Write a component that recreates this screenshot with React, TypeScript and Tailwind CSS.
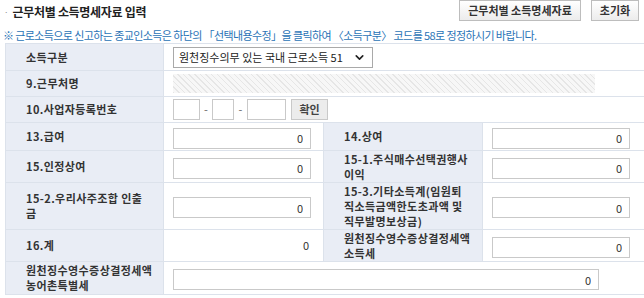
import { ChevronDown } from "lucide-react";

const font = { fontFamily: '"Noto Sans CJK KR", "Noto Sans", sans-serif' };

function Label({ children, className = "" }: { children: React.ReactNode; className?: string }) {
  return (
    <td className={`bg-[#e9edf5] border border-[#dce2eb] pl-[20px] text-[11px] font-bold leading-[15px] tracking-[0.4px] text-[#333] align-middle ${className}`}>
      {children}
    </td>
  );
}

function Amount({ w = "w-[138px]" }: { w?: string }) {
  return (
    <input
      readOnly
      defaultValue="0"
      className={`${w} h-[21px] border border-[#c9c9c9] bg-white pr-[7px] text-right text-[11px] text-[#333] outline-none`}
    />
  );
}

function Cell({ children, colSpan }: { children?: React.ReactNode; colSpan?: number }) {
  return (
    <td colSpan={colSpan} className="border border-[#dce2eb] pl-[9px] align-middle">
      {children}
    </td>
  );
}

export default function App() {
  return (
    <div className="w-[644px] h-[298px] bg-white overflow-hidden" style={font}>
      <div className="flex h-[22px] items-center justify-between pr-[5px]">
        <div className="flex items-center pl-[4px] pt-[2px]">
          <span className="mr-[4px] text-[8px] text-[#888]">·</span>
          <span className="text-[12px] font-bold tracking-[-0.3px] text-[#222]">근무처별 소득명세자료 입력</span>
        </div>
        <div className="flex items-start gap-[10px] self-start">
          <button className="h-[21px] w-[122px] border border-[#bdbdbd] bg-gradient-to-b from-white to-[#ececec] text-[11px] font-bold text-[#333]">
            근무처별 소득명세자료
          </button>
          <button className="h-[21px] w-[48px] border border-[#bdbdbd] bg-gradient-to-b from-white to-[#ececec] text-[11px] font-bold text-[#333]">
            초기화
          </button>
        </div>
      </div>

      <div className="flex h-[21px] items-end pl-[3px] pb-[1px] text-[11px] leading-[13px] tracking-[-0.6px] text-[#2a73b6]">
        ※ 근로소득으로 신고하는 종교인소득은 하단의 「선택내용수정」을 클릭하여 〈소득구분〉 코드를 58로 정정하시기 바랍니다.
      </div>

      <table className="ml-[5px] w-[640px] table-fixed border-collapse">
        <colgroup>
          <col className="w-[158px]" />
          <col className="w-[160px]" />
          <col className="w-[159px]" />
          <col className="w-[163px]" />
        </colgroup>
        <tbody>
          <tr className="h-[27px]">
            <Label>소득구분</Label>
            <Cell colSpan={3}>
              <div className="flex h-[21px] w-[200px] items-center justify-between border border-[#a9a9a9] bg-white pl-[5px] pr-[6px] text-[11px] text-[#222]">
                <span>원천징수의무 있는 국내 근로소득 51</span>
                <ChevronDown size={13} strokeWidth={3} />
              </div>
            </Cell>
          </tr>
          <tr className="h-[26px]">
            <Label>9.근무처명</Label>
            <Cell colSpan={3}>
              <div className="h-[19px] w-[422px] bg-[repeating-linear-gradient(45deg,#e6e6e6_0px,#e6e6e6_1px,#f7f7f7_1px,#f7f7f7_4px)]" />
            </Cell>
          </tr>
          <tr className="h-[26px]">
            <Label>10.사업자등록번호</Label>
            <Cell colSpan={3}>
              <div className="flex items-center text-[11px] text-[#666]">
                <input readOnly className="h-[21px] w-[27px] border border-[#c9c9c9] bg-white outline-none" />
                <span className="w-[12px] text-center">-</span>
                <input readOnly className="h-[21px] w-[22px] border border-[#c9c9c9] bg-white outline-none" />
                <span className="w-[13px] text-center">-</span>
                <input readOnly className="h-[21px] w-[39px] border border-[#c9c9c9] bg-white outline-none" />
                <button className="ml-[5px] h-[21px] w-[37px] border border-[#c9c9c9] bg-[#ececec] text-[11px] font-bold text-[#444]">
                  확인
                </button>
              </div>
            </Cell>
          </tr>
          <tr className="h-[28px]">
            <Label>13.급여</Label>
            <Cell><Amount /></Cell>
            <Label>14.상여</Label>
            <Cell><Amount /></Cell>
          </tr>
          <tr className="h-[32px]">
            <Label>15.인정상여</Label>
            <Cell><Amount /></Cell>
            <Label>15-1.주식매수선택권행사<br />이익</Label>
            <Cell><Amount /></Cell>
          </tr>
          <tr className="h-[47px]">
            <Label>15-2.우리사주조합 인출<br />금</Label>
            <Cell><Amount /></Cell>
            <Label>15-3.기타소득계(임원퇴<br />직소득금액한도초과액 및<br />직무발명보상금)</Label>
            <Cell><Amount /></Cell>
          </tr>
          <tr className="h-[32px]">
            <Label>16.계</Label>
            <td className="border border-[#dce2eb] pr-[14px] text-right text-[11px] text-[#333]">0</td>
            <Label>원천징수영수증상결정세액<br />소득세</Label>
            <Cell><Amount /></Cell>
          </tr>
          <tr className="h-[33px]">
            <Label>원천징수영수증상결정세액<br />농어촌특별세</Label>
            <Cell colSpan={3}><Amount w="w-[426px]" /></Cell>
          </tr>
        </tbody>
      </table>
    </div>
  );
}
